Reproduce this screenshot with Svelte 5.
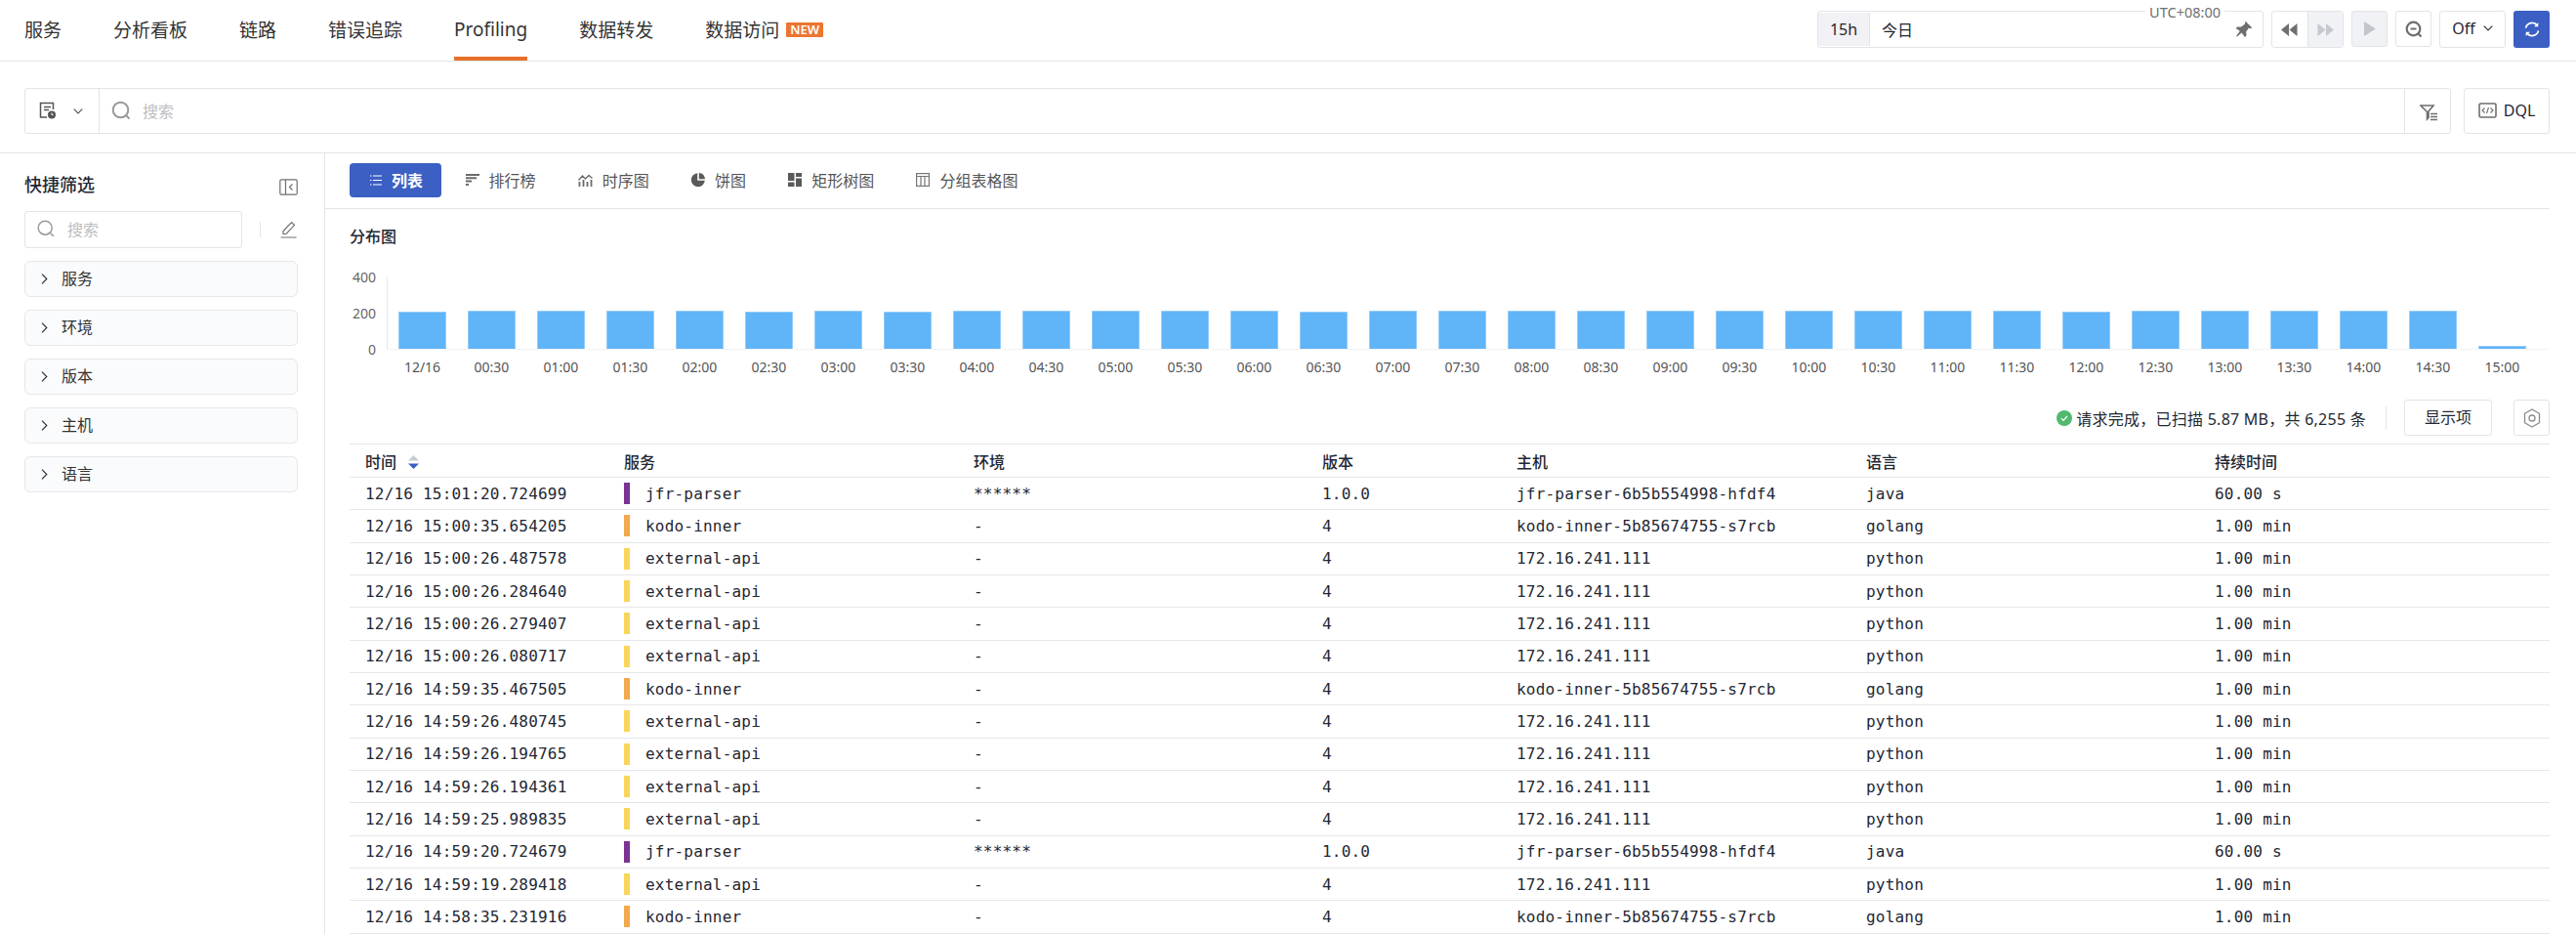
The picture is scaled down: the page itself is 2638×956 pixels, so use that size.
<script lang="ts">
	const tabs = ['服务', '分析看板', '链路', '错误追踪', 'Profiling', '数据转发', '数据访问'];
	const filters = ['服务', '环境', '版本', '主机', '语言'];
	const views = [
		{ name: '排行榜', icon: 'rank' },
		{ name: '时序图', icon: 'series' },
		{ name: '饼图', icon: 'pie' },
		{ name: '矩形树图', icon: 'tree' },
		{ name: '分组表格图', icon: 'group' }
	];

	const labels = [
		'12/16', '00:30', '01:00', '01:30', '02:00', '02:30', '03:00', '03:30', '04:00', '04:30', '05:00',
		'05:30', '06:00', '06:30', '07:00', '07:30', '08:00', '08:30', '09:00', '09:30', '10:00', '10:30',
		'11:00', '11:30', '12:00', '12:30', '13:00', '13:30', '14:00', '14:30', '15:00'
	];
	const counts = [
		202, 208, 206, 206, 207, 203, 206, 205, 206, 207, 206, 206, 206, 203, 206, 206, 206, 206, 206, 206,
		206, 206, 207, 206, 205, 206, 206, 206, 209, 207, 16
	];

	const columns = ['时间', '服务', '环境', '版本', '主机', '语言', '持续时间'];
	const services = {
		jfr: { name: 'jfr-parser', color: '#7b3393', env: '******', version: '1.0.0', host: 'jfr-parser-6b5b554998-hfdf4', lang: 'java', time: '60.00 s' },
		kodo: { name: 'kodo-inner', color: '#f2a94d', env: '-', version: '4', host: 'kodo-inner-5b85674755-s7rcb', lang: 'golang', time: '1.00 min' },
		ext: { name: 'external-api', color: '#f9d55b', env: '-', version: '4', host: '172.16.241.111', lang: 'python', time: '1.00 min' }
	};
	const rows = [
		['15:01:20.724699', services.jfr],
		['15:00:35.654205', services.kodo],
		['15:00:26.487578', services.ext],
		['15:00:26.284640', services.ext],
		['15:00:26.279407', services.ext],
		['15:00:26.080717', services.ext],
		['14:59:35.467505', services.kodo],
		['14:59:26.480745', services.ext],
		['14:59:26.194765', services.ext],
		['14:59:26.194361', services.ext],
		['14:59:25.989835', services.ext],
		['14:59:20.724679', services.jfr],
		['14:59:19.289418', services.ext],
		['14:58:35.231916', services.kodo]
	];
</script>

<div class="page">
	<header class="topbar">
		<nav class="nav">
			{#each tabs as tab}
				<span class="nav-item" class:current={tab === 'Profiling'}>
					{tab}
					{#if tab === '数据访问'}<em class="new">NEW</em>{/if}
				</span>
			{/each}
		</nav>
		<div class="controls">
			<div class="timepicker">
				<span class="range">15h</span>
				<span class="today">今日</span>
				<span class="utc">UTC+08:00</span>
				<svg class="pin" width="18" height="18" viewBox="0 0 18 18" fill="#6f6f6f">
					<path d="M10.5 .8 17.2 7.2 15.6 8.2 13.8 7.8 11.2 11.6 11.5 15.6 9.8 17 6.6 12.6 2 16.6 1 16 4.8 10.8 .6 8 2 6.4 6.2 6.6 9.8 3.8z" />
				</svg>
			</div>
			<div class="seek">
				<span class="btn-cell">
					<svg width="17" height="13" viewBox="0 0 17 13" fill="#6f6f6f"><path d="M8 0v13L0 6.500zM16.500 0v13l-8-6.500z" /></svg>
				</span>
				<span class="btn-cell off">
					<svg width="17" height="13" viewBox="0 0 17 13" fill="#c6c8ce"><path d="M.5 0v13l8-6.500zM9 0v13l8-6.500z" /></svg>
				</span>
			</div>
			<span class="square off">
				<svg width="12" height="15" viewBox="0 0 12 15" fill="#c3c5cc"><path d="M0 0v15l12-7.500z" /></svg>
			</span>
			<span class="square">
				<svg width="18" height="18" viewBox="0 0 18 18" fill="none" stroke="#6f6f6f" stroke-width="2.200">
					<circle cx="8.500" cy="8.500" r="6.800" />
					<path d="M5.500 8.500h6M13.500 13.500l3 3" />
				</svg>
			</span>
			<span class="off-select">
				Off
				<svg width="10" height="6" viewBox="0 0 10 6" fill="none" stroke="#333" stroke-width="1.200"><path d="M.7.700 5 5l4.300-4.300" /></svg>
			</span>
			<span class="refresh">
				<svg width="16" height="16" viewBox="0 0 16 16" fill="none" stroke="#fff" stroke-width="1.700">
					<path d="M1.500 6.600A6.700 6.700 0 0 1 13.400 4.200" />
					<path d="M14.500 9.400A6.700 6.700 0 0 1 2.600 11.800" />
					<path d="M14.300 1v4.200h-4.200z" fill="#fff" stroke="none" />
					<path d="M1.700 15v-4.200h4.200z" fill="#fff" stroke="none" />
				</svg>
			</span>
		</div>
	</header>

	<div class="searchrow">
		<div class="searchbox">
			<div class="source">
				<svg width="18" height="19" viewBox="0 0 18 19" fill="none" stroke="#555" stroke-width="1.500">
					<path d="M8 16H1.500V1.500h13V8" />
					<path d="M5 5.500h7M5 8.500h5" />
					<circle cx="13" cy="13.500" r="4" fill="#555" stroke="none" />
					<path d="M13 11.500v2h1.500" stroke="#fff" stroke-width="1" />
				</svg>
				<svg width="10" height="6" viewBox="0 0 10 6" fill="none" stroke="#555" stroke-width="1.200"><path d="M.7.700 5 5l4.300-4.300" /></svg>
			</div>
			<div class="query">
				<svg width="20" height="20" viewBox="0 0 20 20" fill="none" stroke="#999" stroke-width="2"><circle cx="9.500" cy="9.500" r="7.800" /><path d="m15 15 3.600 3.600" /></svg>
				<span>搜索</span>
			</div>
			<div class="filter-cell">
				<svg width="19" height="17" viewBox="0 0 19 17" fill="none" stroke="#6f6f6f" stroke-width="1.600">
					<path d="M1 1h13L9 7v6.500L7.500 15V7.500z" />
					<path d="M11 9.500h7M11 12.500h7M11 15.500h7" stroke-width="1.500" />
				</svg>
			</div>
		</div>
		<span class="dql">
			<svg width="19" height="16" viewBox="0 0 19 16" fill="none" stroke="#6f6f6f" stroke-width="1.600">
				<rect x="1" y="1" width="17" height="14" rx="1.500" />
				<path d="M6.500 5.500 4 8l2.500 2.500M12.500 5.500 15 8l-2.500 2.500M10.500 5 8.500 11" stroke-width="1.100" />
			</svg>
			DQL
		</span>
	</div>

	<div class="main">
		<aside class="sidebar">
			<div class="side-title">
				<span>快捷筛选</span>
				<svg width="19" height="17" viewBox="0 0 19 17" fill="none" stroke="#6f6f6f" stroke-width="1.200">
					<rect x=".8" y=".8" width="17.400" height="15.400" rx="1.500" />
					<path d="M6.500 1v15M13.500 5.500 10.500 8.500l3 3" />
				</svg>
			</div>
			<div class="side-search">
				<div class="side-input">
					<svg width="18" height="18" viewBox="0 0 18 18" fill="none" stroke="#999" stroke-width="1.500"><circle cx="8.200" cy="8.200" r="7" /><path d="m13.500 13.500 3.300 3.300" /></svg>
					<span>搜索</span>
				</div>
				<i class="side-sep"></i>
				<svg width="17" height="18" viewBox="0 0 17 18" fill="none" stroke="#6f6f6f" stroke-width="1.200">
					<path d="M3 13.500V10.500L11.500 1.500l3 2.800L6 13.500zM.5 17h16" />
				</svg>
			</div>
			{#each filters as item}
				<div class="filter-item">
					<svg width="7" height="11" viewBox="0 0 7 11" fill="none" stroke="#333" stroke-width="1.200"><path d="M1 .7 5.800 5.500 1 10.300" /></svg>
					{item}
				</div>
			{/each}
		</aside>

		<section class="content">
			<div class="viewbar">
				<span class="view active">
					<svg width="12" height="11" viewBox="0 0 12 11" fill="none" stroke="#fff" stroke-width="1.200">
						<path d="M3 1h9M3 5.500h9M3 10h9M0 1h1.500M0 5.500h1.500M0 10h1.500" />
					</svg>
					列表
				</span>
				{#each views as view}
					<span class="view">
						{#if view.icon === 'rank'}
							<svg width="14" height="12" viewBox="0 0 14 12" fill="#6b6b6b"><path d="M0 0h14v2H0zM0 3.300h11v2H0zM0 6.600h6v2H0zM0 10h3v2H0z" /></svg>
						{:else if view.icon === 'series'}
							<svg width="15" height="13" viewBox="0 0 15 13" fill="none" stroke="#6b6b6b" stroke-width="1.300">
								<path d="M.5 6.500 4.500 2l3 3L11 1.500l3.500 3" />
								<path d="M1.500 8v5M5.500 6v7M9.500 8v5M13.500 6v7" stroke-width="1.800" />
							</svg>
						{:else if view.icon === 'pie'}
							<svg width="14" height="14" viewBox="0 0 14 14" fill="#5a5a5a"><path d="M6.200.2V7.800H13.800A7 7 0 1 1 6.200.2z" /><path d="M7.800 0A7 7 0 0 1 14 6.200H7.800z" /></svg>
						{:else if view.icon === 'tree'}
							<svg width="14" height="14" viewBox="0 0 14 14" fill="#5a5a5a"><path d="M0 0h6.500v8H0zM8 0h6v4H8zM8 5.500h6V14H8zM0 9.500h6.500V14H0z" /></svg>
						{:else}
							<svg width="14" height="14" viewBox="0 0 14 14" fill="none" stroke="#777" stroke-width="1.200"><rect x=".6" y=".6" width="12.800" height="12.800" /><path d="M.6 3.500h12.800M5 3.500v10M9 3.500v10" /></svg>
						{/if}
						{view.name}
					</span>
				{/each}
			</div>

			<h3 class="dist-title">分布图</h3>
			<div class="chart">
				<div class="y-labels"><span>400</span><span>200</span><span>0</span></div>
				<div class="plot-wrap">
					<div class="plot">
						{#each counts as n}
							<div class="slot"><div class="bar" style="height: {n * 0.1875}px"></div></div>
						{/each}
					</div>
					<div class="x-labels">
						{#each labels as l}<span>{l}</span>{/each}
					</div>
				</div>
			</div>

			<div class="status">
				<svg width="16" height="16" viewBox="0 0 16 16"><circle cx="8" cy="8" r="8" fill="#52b96f" /><path d="m4.800 8.200 2.200 2.200 4-4.400" fill="none" stroke="#fff" stroke-width="1.200" /></svg>
				<span class="status-text">请求完成，已扫描 5.87 MB，共 6,255 条</span>
				<i class="status-sep"></i>
				<span class="show-cols">显示项</span>
				<span class="gear">
					<svg width="18" height="20" viewBox="0 0 18 20" fill="none" stroke="#8a8a8a" stroke-width="1.300">
						<path d="M9 1l7.500 4.300v9.400L9 19l-7.500-4.300V5.300z" stroke-linejoin="round" />
						<circle cx="9" cy="10" r="3" />
					</svg>
				</span>
			</div>

			<div class="table">
				<div class="tr head">
					{#each columns as col, i}
						<div class="td">
							{col}
							{#if i === 0}
								<svg class="sort" width="11" height="14" viewBox="0 0 11 14"><path d="M5.500 0 11 5.500H0z" fill="#c9ccd3" /><path d="M5.500 14 0 8.500h11z" fill="#3c5fc4" /></svg>
							{/if}
						</div>
					{/each}
				</div>
				{#each rows as [time, s]}
					<div class="tr">
						<div class="td">12/16 {time}</div>
						<div class="td svc"><i class="swatch" style="background: {s.color}"></i>{s.name}</div>
						<div class="td">{s.env}</div>
						<div class="td">{s.version}</div>
						<div class="td">{s.host}</div>
						<div class="td">{s.lang}</div>
						<div class="td">{s.time}</div>
					</div>
				{/each}
			</div>
		</section>
	</div>
</div>

<style>
	:global(body) {
		margin: 0;
		background: #fff;
	}

	.page {
		width: 2638px;
		height: 956px;
		overflow: hidden;
		font-family: 'Noto Sans', 'Noto Sans CJK SC', sans-serif;
		color: #1f2733;
		font-size: 16px;
	}

	.topbar {
		display: flex;
		justify-content: space-between;
		height: 63px;
		box-sizing: border-box;
		border-bottom: 1px solid #e3e4e8;
		padding: 0 27px 0 25px;
	}

	.nav {
		display: flex;
		gap: 53px;
	}

	.nav-item {
		display: flex;
		align-items: center;
		gap: 7px;
		height: 62px;
		box-sizing: border-box;
		padding-bottom: 2px;
		font-size: 19px;
		color: #333;
		position: relative;
	}

	.nav-item.current::after {
		content: '';
		position: absolute;
		left: 0;
		right: 0;
		bottom: 0;
		height: 4px;
		background: #e8702a;
	}

	.new {
		font-style: normal;
		font-size: 13px;
		font-weight: 600;
		line-height: 15px;
		padding: 0 4px;
		background: #ec7530;
		color: #fff;
		border-radius: 1px;
	}

	.controls {
		display: flex;
		gap: 8px;
		padding-top: 11px;
	}

	.timepicker,
	.seek,
	.square,
	.off-select,
	.dql,
	.searchbox,
	.side-input,
	.show-cols,
	.gear {
		border: 1px solid #e3e4e8;
		border-radius: 3px;
		box-sizing: border-box;
		background: #fff;
	}

	.timepicker {
		position: relative;
		display: flex;
		align-items: center;
		width: 457px;
		height: 38px;
	}

	.range {
		width: 53px;
		height: 34px;
		line-height: 34px;
		text-align: center;
		background: #f1f1f6;
		border-right: 1px solid #e3e4e8;
		box-sizing: border-box;
	}

	.today {
		margin-left: 12px;
	}

	.utc {
		position: absolute;
		right: 39px;
		top: -10px;
		padding: 0 4px;
		background: #fff;
		font-size: 14.5px;
		line-height: 20px;
		color: #6f6f6f;
	}

	.pin {
		position: absolute;
		right: 10px;
		top: 9px;
	}

	.seek {
		display: flex;
		width: 74px;
		height: 38px;
		overflow: hidden;
	}

	.btn-cell {
		flex: 1;
		display: flex;
		align-items: center;
		justify-content: center;
	}

	.btn-cell.off {
		background: #f1f2f5;
		border-left: 1px solid #e3e4e8;
	}

	.square {
		width: 37px;
		height: 37px;
		display: flex;
		align-items: center;
		justify-content: center;
	}

	.square.off {
		background: #f1f2f5;
	}

	.off-select {
		width: 68px;
		height: 38px;
		display: flex;
		align-items: center;
		justify-content: center;
		gap: 8px;
		padding-bottom: 2px;
	}

	.refresh {
		width: 37px;
		height: 38px;
		background: #3c5fc4;
		border-radius: 3px;
		display: flex;
		align-items: center;
		justify-content: center;
	}

	.searchrow {
		display: flex;
		gap: 13px;
		padding: 27px 27px 19px 25px;
		border-bottom: 1px solid #e3e4e8;
	}

	.searchbox {
		flex: 1;
		height: 47px;
		display: flex;
	}

	.source {
		width: 76px;
		box-sizing: border-box;
		display: flex;
		align-items: center;
		gap: 17px;
		padding-left: 14px;
		border-right: 1px solid #e3e4e8;
	}

	.query {
		flex: 1;
		display: flex;
		align-items: center;
		gap: 12px;
		padding-left: 12px;
		padding-bottom: 1px;
		color: #bdbdbd;
	}

	.filter-cell {
		width: 47px;
		display: flex;
		align-items: center;
		justify-content: center;
		border-left: 1px solid #e3e4e8;
		padding-left: 3px;
		padding-top: 3px;
		box-sizing: border-box;
	}

	.dql {
		width: 88px;
		height: 47px;
		display: flex;
		align-items: center;
		justify-content: center;
		gap: 7px;
		padding-bottom: 2px;
	}

	.main {
		display: flex;
		height: 799px;
	}

	.sidebar {
		width: 333px;
		box-sizing: border-box;
		padding: 0 27px 0 25px;
		border-right: 1px solid #e3e4e8;
	}

	.side-title {
		display: flex;
		justify-content: space-between;
		align-items: center;
		height: 59px;
		padding-top: 3px;
		box-sizing: border-box;
		font-size: 18px;
		font-weight: 500;
	}

	.side-title svg {
		margin-top: 7px;
	}

	.side-search {
		display: flex;
		align-items: center;
		height: 37px;
		margin-bottom: 14px;
	}

	.side-input {
		width: 223px;
		height: 38px;
		display: flex;
		align-items: center;
		gap: 13px;
		padding-left: 12px;
		padding-bottom: 1px;
		color: #bdbdbd;
	}

	.side-sep {
		width: 1px;
		height: 16px;
		background: #e3e4e8;
		margin: 0 20px 0 18px;
	}

	.filter-item {
		display: flex;
		align-items: center;
		gap: 14px;
		height: 37px;
		box-sizing: border-box;
		padding: 0 0 3px 16px;
		margin-bottom: 13px;
		background: #fafbfc;
		border: 1px solid #e6e7eb;
		border-radius: 6px;
		color: #333;
	}

	.filter-item svg {
		margin-top: 3px;
	}

	.content {
		flex: 1;
		padding: 0 27px 0 0;
		min-width: 0;
	}

	.viewbar {
		display: flex;
		align-items: center;
		height: 57px;
		box-sizing: border-box;
		border-bottom: 1px solid #e3e4e8;
		padding-left: 25px;
		padding-bottom: 2px;
	}

	.view {
		display: flex;
		align-items: center;
		gap: 10px;
		height: 35px;
		padding: 0 21.6px;
		color: #555;
	}

	.view.active {
		background: #3c5fc4;
		color: #fff;
		font-weight: 700;
		border-radius: 4px;
		padding: 0 19px 0 21px;
		margin-right: 3px;
	}

	.dist-title {
		margin: 0 0 0 25px;
		padding-top: 16px;
		font-size: 16px;
		font-weight: 500;
		line-height: 24px;
	}

	.chart {
		display: flex;
		margin-left: 25px;
		margin-top: 21px;
		height: 111px;
	}

	.y-labels {
		width: 38px;
		height: 94px;
		margin-top: -1px;
		box-sizing: border-box;
		padding-right: 11px;
		display: flex;
		flex-direction: column;
		justify-content: space-between;
		align-items: flex-end;
		font-size: 14px;
		line-height: 20px;
		color: #666;
	}

	.plot-wrap {
		flex: 1;
	}

	.plot {
		display: flex;
		height: 75px;
		margin-top: 8px;
		align-items: flex-end;
		border-left: 1px solid #e6e7eb;
		border-bottom: 1px solid #f2f2f4;
		box-sizing: border-box;
	}

	.slot {
		width: 71px;
		flex: none;
		display: flex;
		justify-content: center;
	}

	.bar {
		width: 49px;
		background: #60b4f8;
		border: 1px solid #94cdfa;
		border-bottom: 0;
		box-sizing: border-box;
	}

	.x-labels {
		display: flex;
		margin-top: 8px;
		padding-left: 1px;
		font-size: 14px;
		line-height: 20px;
		color: #555;
	}

	.x-labels span {
		width: 71px;
		flex: none;
		text-align: center;
	}

	.status {
		display: flex;
		align-items: center;
		justify-content: flex-end;
		height: 37px;
		margin-top: 23px;
	}

	.status-text {
		margin-left: 4px;
		letter-spacing: 0.25px;
	}

	.status-sep {
		width: 1px;
		height: 24px;
		background: #e3e4e8;
		margin: 0 18px 0 20px;
	}

	.show-cols {
		width: 90px;
		height: 37px;
		line-height: 35px;
		text-align: center;
	}

	.gear {
		width: 37px;
		height: 37px;
		margin-left: 22px;
		display: flex;
		align-items: center;
		justify-content: center;
	}

	.table {
		margin: 8px 0 0 25px;
		border-top: 1px solid #e3e4e8;
		font-family: 'DejaVu Sans Mono', monospace;
		letter-spacing: 0.2px;
	}

	.tr {
		display: grid;
		grid-template-columns: 265px 358px 357px 199px 358px 357px 359px;
		height: 33.33px;
		box-sizing: border-box;
		border-bottom: 1px solid #e6e7eb;
		align-items: center;
	}

	.tr.head {
		height: 34px;
		font-family: 'Noto Sans', 'Noto Sans CJK SC', sans-serif;
		font-weight: 500;
		letter-spacing: 0;
	}

	.td {
		padding-left: 16px;
		white-space: nowrap;
	}

	.sort {
		margin-left: 8px;
		vertical-align: -1px;
	}

	.td.svc {
		display: flex;
		align-items: center;
	}

	.swatch {
		width: 6px;
		height: 22px;
		margin-right: 16px;
	}
</style>
